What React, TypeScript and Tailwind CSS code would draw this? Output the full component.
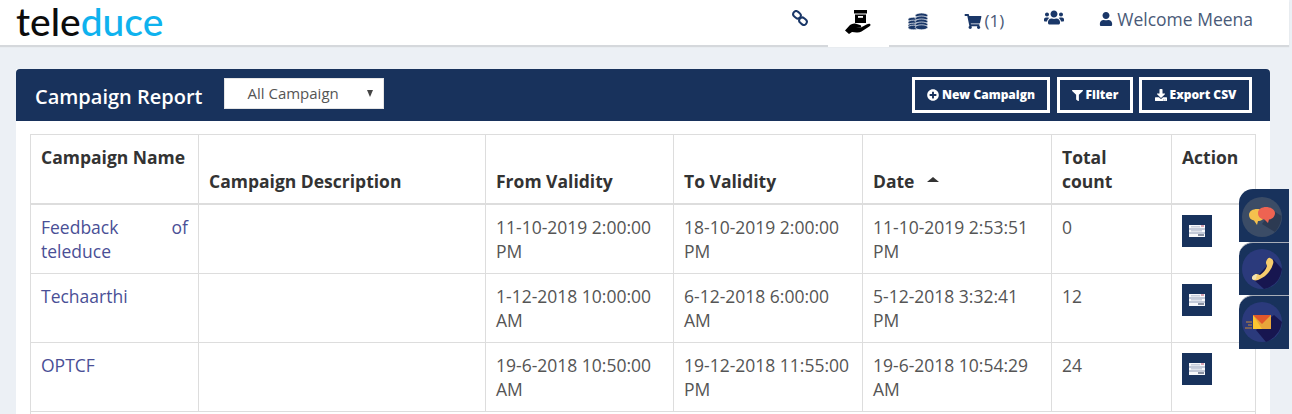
import { FaShoppingCart, FaUsers, FaUser, FaPlusCircle, FaFilter, FaDownload } from "react-icons/fa";

const rows = [
  { name: "Feedback of teleduce", from: "11-10-2019 2:00:00 PM", to: "18-10-2019 2:00:00 PM", date: "11-10-2019 2:53:51 PM", count: "0" },
  { name: "Techaarthi", from: "1-12-2018 10:00:00 AM", to: "6-12-2018 6:00:00 AM", date: "5-12-2018 3:32:41 PM", count: "12" },
  { name: "OPTCF", from: "19-6-2018 10:50:00 AM", to: "19-12-2018 11:55:00 PM", date: "19-6-2018 10:54:29 AM", count: "24" },
];

function Chain() {
  return (
    <svg width="16" height="16" viewBox="0 0 16 16" fill="none" stroke="#1a3768" strokeWidth="2">
      <rect x="1" y="1.800" width="8" height="6" rx="3" transform="rotate(40 5 4.800)" />
      <rect x="7" y="8.200" width="8" height="6" rx="3" transform="rotate(40 11 11.200)" />
    </svg>
  );
}

function Coins() {
  return (
    <svg width="20" height="17" viewBox="0 0 20 17">
      <g stroke="#fff" strokeWidth="0.700" fill="#1a3768">
        {[6.500, 9.500, 12.500, 14.500].map((y) => (
          <ellipse key={y} cx="5.500" cy={y} rx="5.500" ry="2.300" />
        ))}
        {[2.500, 5.500, 8.500, 11.500, 14.300].map((y) => (
          <ellipse key={y} cx="13.500" cy={y} rx="6.300" ry="2.500" />
        ))}
      </g>
    </svg>
  );
}

function HandBox() {
  return (
    <svg width="26" height="24" viewBox="0 0 26 24">
      <path d="M9 0h13v3.500H9z" fill="#000" />
      <path d="M10 4.500h11V13H10z" fill="#000" />
      <path d="M13 6h5v1.800h-5z" fill="#fff" />
      <path d="M0 20.500l5-5.500c2-1.500 4-2 6-1.200l4 1.200c2 .6 1.500 2.800-.5 2.800h-3.500l4 .3 7-3.800c2-1 3.500-.5 3.500.8 0 .8-1 1.400-2 2l-7 4.300c-1.500.8-3 1.200-5 1l-4.500-.5L4 24z" fill="#000" />
    </svg>
  );
}

function ActionIcon() {
  return (
    <span className="flex h-8 w-[30px] items-center justify-center bg-[#18325c]">
      <svg width="16" height="12" viewBox="0 0 16 12">
        <rect width="16" height="12" fill="#f7f8fb" />
        <rect y="3.500" width="16" height="1" fill="#8f9cb8" />
        <rect y="7.500" width="16" height="1" fill="#8f9cb8" />
        <rect x="2" y="5" width="11" height="1.500" fill="#c9cfdd" />
        <rect x="2" y="1" width="9" height="1.500" fill="#c9cfdd" />
        <rect x="9" y="9.500" width="6" height="1" fill="#1d2b4d" />
        <rect x="12" y="0.500" width="3" height="1" fill="#c0506a" />
      </svg>
    </span>
  );
}

function Chat() {
  return (
    <svg width="40" height="40" viewBox="0 0 40 40">
      <circle cx="20" cy="20" r="20" fill="#3b4c66" />
      <path d="M20 27 L33 35 Q39 28 39.500 19 L30 13z" fill="#2c3a52" />
      <path d="M7 18c0-4 4-6 8-6s8 2 8 6-4 6-7 6l-1 4-3-4.500c-3-.5-5-2.500-5-5.500z" fill="#f4c04e" />
      <path d="M16 16c0-4 4-6 8-6s9 2 9 6-3 6-6 6.500l-1 3.500-3.500-3.500c-3.500-.3-6.500-2.500-6.500-6.500z" fill="#ee6352" />
    </svg>
  );
}

function Phone() {
  return (
    <svg width="40" height="40" viewBox="0 0 40 40">
      <circle cx="20" cy="20" r="20" fill="#2b3a7c" />
      <path d="M12 31 L22 40 Q38 36 40 20 L31 10z" fill="#171650" />
      <path d="M28 9c3 1 4 3 3 6-2 7-7 13-15 16-3 1-6 0-6-2 0-2 3-4 5-4 1 0 2 1 3 1 3-2 6-5 7-9 0-1-1-2-1-3 0-2 2-6 4-5z" fill="#f7cd6d" />
      <path d="M10 29c0-2 3-4 5-4l-1 5c-2 1-4 1-4-1z" fill="#f2e2b2" />
    </svg>
  );
}

function Mail() {
  return (
    <svg width="40" height="40" viewBox="0 0 40 40">
      <circle cx="20" cy="20" r="20" fill="#2b3a7c" />
      <path d="M14 28 L24 40 Q38 34 40 20 L32 13z" fill="#171650" />
      <path d="M11 13h18v14H11z" fill="#e8a53a" />
      <path d="M11 13l9 14H11z" fill="#fbc531" />
      <path d="M11 13h18l-9 9z" fill="#e2572b" />
      <path d="M4 20h6M6 23h4M3 26h7" stroke="#c98a36" strokeWidth="1" />
    </svg>
  );
}

export default function App() {
  const th = "border border-[#dddddd] border-b-2 px-[10px] py-[10px] text-left text-[17.500px] leading-6 font-bold text-[#333333]";
  const cell = "border border-[#dddddd] p-[10px] align-top text-[17.500px] leading-6";
  const td = `${cell} text-[#555555]`;
  const btn = "flex h-9 items-center justify-center gap-[3px] border-[3px] border-white text-xs font-extrabold text-white";
  return (
    <div className="relative h-[414px] w-[1292px] overflow-hidden bg-[#ecf0f5] font-['Open_Sans',sans-serif]">
      <header className="flex h-[45px] w-[1289px] items-start justify-between bg-white shadow-[0_2px_1px_#d5d8dc]">
        <div className="pl-4 font-['Lato',sans-serif] text-[39px] leading-[42px] font-medium">
          <span className="text-[#0c0c0c]">tele</span>
          <span className="text-[#0fb2ee]">duce</span>
        </div>
        <nav className="flex h-[47px] items-start">
          <span className="mt-[10px] mr-[20px]"><Chain /></span>
          <span className="z-10 flex h-[47px] w-[61px] justify-center bg-white pt-[10px]"><HandBox /></span>
          <span className="mt-[13px] ml-[19px]"><Coins /></span>
          <span className="mt-[9px] ml-[36px] flex items-center gap-[3px] text-[17px] leading-6 text-[#4a5a78]">
            <FaShoppingCart className="h-[15px] w-[18px] text-[#1a3768]" />(1)
          </span>
          <span className="mt-[8px] ml-[40px] text-[#1a3768]"><FaUsers className="h-[19px] w-[20px]" /></span>
          <span className="mt-[7px] ml-[35px] mr-[36px] flex items-center gap-[4px] text-[17.500px] leading-6 text-[#4a5a78]">
            <FaUser className="h-[14px] w-[14px] text-[#1a3768]" />Welcome Meena
          </span>
        </nav>
      </header>

      <main className="px-4 pt-6 pr-[22px]">
        <section className="bg-white">
          <div className="flex h-[52px] items-center justify-between rounded-t bg-[#18325c] pr-[18px] pl-[19px]">
            <div className="flex items-center gap-[22px]">
              <h1 className="pt-[3px] text-xl font-semibold text-white">Campaign Report</h1>
              <div className="relative -mt-[4px] flex h-[31px] w-[160px] items-center border border-[#e5e5e5] bg-white pl-[22px] text-[15px] text-[#555555]">
                All Campaign
                <span className="absolute top-[11px] right-[10px] h-0 w-0 border-x-[3.500px] border-t-[7px] border-x-transparent border-t-[#444444]" />
              </div>
            </div>
            <div className="flex">
              <button className={`${btn} w-[138px]`}><FaPlusCircle />New Campaign</button>
              <button className={`${btn} ml-[7px] w-[76px]`}><FaFilter className="h-[11px] w-[11px]" />Filter</button>
              <button className={`${btn} ml-[6px] w-[113px]`}><FaDownload />Export CSV</button>
            </div>
          </div>
          <div className="px-[14px] pt-[13px]">
            <table className="w-[1225px] table-fixed border-collapse">
              <colgroup>
                <col className="w-[168px]" />
                <col className="w-[287px]" />
                <col className="w-[188px]" />
                <col className="w-[189px]" />
                <col className="w-[189px]" />
                <col className="w-[120px]" />
                <col className="w-[84px]" />
              </colgroup>
              <thead>
                <tr className="h-[69px]">
                  <th className={`${th} align-top`}>Campaign Name</th>
                  <th className={`${th} align-bottom`}>Campaign Description</th>
                  <th className={`${th} align-bottom`}>From Validity</th>
                  <th className={`${th} align-bottom`}>To Validity</th>
                  <th className={`${th} align-bottom`}>
                    <span className="flex items-center gap-[13px]">Date
                      <span className="mb-1 h-0 w-0 border-x-[6px] border-b-[5px] border-x-transparent border-b-[#333333]" />
                    </span>
                  </th>
                  <th className={`${th} align-bottom`}>Total<br />count</th>
                  <th className={`${th} align-top`}>Action</th>
                </tr>
              </thead>
              <tbody>
                {rows.map((r) => (
                  <tr key={r.name} className="h-[69px]">
                    <td className={`${cell} text-justify text-[#4a4f96]`}>{r.name}</td>
                    <td className={td}></td>
                    <td className={td}>{r.from}</td>
                    <td className={td}>{r.to}</td>
                    <td className={td}>{r.date}</td>
                    <td className={td}>{r.count}</td>
                    <td className={td}><ActionIcon /></td>
                  </tr>
                ))}
                <tr>
                  <td className={td} colSpan={7}></td>
                </tr>
              </tbody>
            </table>
          </div>
        </section>
      </main>

      <aside className="absolute top-[189px] left-[1239px] flex w-[50px] flex-col">
        <div className="h-[53px] rounded-tl-[14px] bg-[#18325c] pt-[8px] pl-[3px]"><Chat /></div>
        <div className="h-[53px] rounded-tl-[14px] border-t border-[#a7adb8] bg-[#18325c] pt-[6px] pl-[3px]"><Phone /></div>
        <div className="h-[54px] rounded-tl-[14px] border-t border-[#a7adb8] bg-[#18325c] pt-[6px] pl-[3px]"><Mail /></div>
      </aside>
    </div>
  );
}
